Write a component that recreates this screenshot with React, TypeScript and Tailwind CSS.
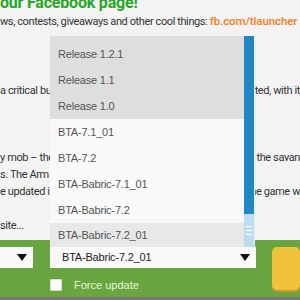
const versions = [
  { name: 'Release 1.2.1', kind: 'release' },
  { name: 'Release 1.1', kind: 'release' },
  { name: 'Release 1.0', kind: 'release' },
  { name: 'BTA-7.1_01', kind: 'mod' },
  { name: 'BTA-7.2', kind: 'mod' },
  { name: 'BTA-Babric-7.1_01', kind: 'mod' },
  { name: 'BTA-Babric-7.2', kind: 'mod' },
  { name: 'BTA-Babric-7.2_01', kind: 'selected' },
];

function Arrow() {
  return (
    <svg width="10" height="7" viewBox="0 0 10 7">
      <path d="M0 0 H10 L5 7 Z" fill="#111" />
    </svg>
  );
}

export default function App() {
  return (
    <div className="relative w-[300px] h-[300px] overflow-hidden bg-[#f3f3f3] font-['Roboto',sans-serif]">
      {/* news page behind the dropdown */}
      <div className="h-[240px] overflow-hidden text-[11px] tracking-[-0.4px] leading-[16px] text-[#333] whitespace-nowrap">
        <div className="-mt-[7px] h-[19px] text-[16px] tracking-[-0.2px] leading-[19px] font-bold text-[#2aa52a]">our Facebook page!</div>
        <div className="h-[16px] mt-[1px]">
          ws, contests, giveaways and other cool things:{' '}
          <span className="text-[11.5px] font-medium tracking-[-0.1px] text-[#f07d1e]">fb.com/tlauncher</span>
        </div>
        <div className="mt-[54px] flex h-[16px]">
          <span className="w-[255px]">a critical bu</span>
          <span>ted, with it</span>
        </div>
        <div className="mt-[51px] flex h-[16px]">
          <span className="w-[258px]">y mob – the</span>
          <span>the savan</span>
        </div>
        <div className="mt-[1px] h-[16px]">s. The Arm</div>
        <div className="mt-[1px] flex h-[16px]">
          <span className="w-[256px]">e updated i</span>
          <span>he game w</span>
        </div>
        <div className="mt-[18px] h-[16px]">site...</div>
      </div>

      {/* launcher footer */}
      <div className="h-[57px] bg-[#69a640] flex items-start pt-[7px] font-['Liberation_Sans',sans-serif]">
        <div className="w-[33px] h-[21px] bg-[#fafafa] flex items-center justify-end pr-[6px]">
          <Arrow />
        </div>
        <div className="ml-[17px] w-[206px] flex flex-col">
          <div className="h-[21px] bg-[#fafafa] flex items-center justify-between pl-[12px] pr-[6px] text-[11px] tracking-[-0.2px] text-[#222]">
            <span>BTA-Babric-7.2_01</span>
            <Arrow />
          </div>
          <label className="mt-[9px] flex items-center gap-[12px] text-[11px] text-[#e6f3dc]">
            <span className="w-[12px] h-[12px] bg-white rounded-[1px] border border-[#d8d8d8]" />
            Force update
          </label>
        </div>
        <div className="ml-[16px] flex-1 h-[43px] rounded-[5px] bg-[#f0c23c] shadow-[0_2px_0_#c79a2c]" />
      </div>
      <div className="h-[3px] bg-[#7a7a7a]" />

      {/* open version list */}
      <div className="absolute left-[50px] top-[36px] w-[205px] h-[211px] flex bg-[#f9f9f9] border-r border-[#e8eef2] font-['Liberation_Sans',sans-serif] text-[11px] tracking-[-0.2px]">
        <div className="flex-1 flex flex-col">
          <div className="bg-[#dedede] pt-[5px]">
            {versions.filter(v => v.kind === 'release').map(v => (
              <div key={v.name} className="h-[26px] flex items-center pl-[8px] text-[#555]">{v.name}</div>
            ))}
          </div>
          {versions.filter(v => v.kind !== 'release').map(v => (
            <div
              key={v.name}
              className={`flex items-center pl-[8px] text-[#555] ${v.kind === 'selected' ? 'bg-[#e8e8e8] h-[24px]' : 'h-[26px]'}`}
            >
              {v.name}
            </div>
          ))}
        </div>
        <div className="w-[10px] flex flex-col bg-[#1f87c3]">
          <div className="flex-1" />
          <div className="h-[33px] bg-[#bcdcf0] flex flex-col items-center justify-center gap-[3px]">
            <span className="w-[6px] h-px bg-white" />
            <span className="w-[6px] h-px bg-white" />
            <span className="w-[6px] h-px bg-white" />
          </div>
        </div>
      </div>
    </div>
  );
}
